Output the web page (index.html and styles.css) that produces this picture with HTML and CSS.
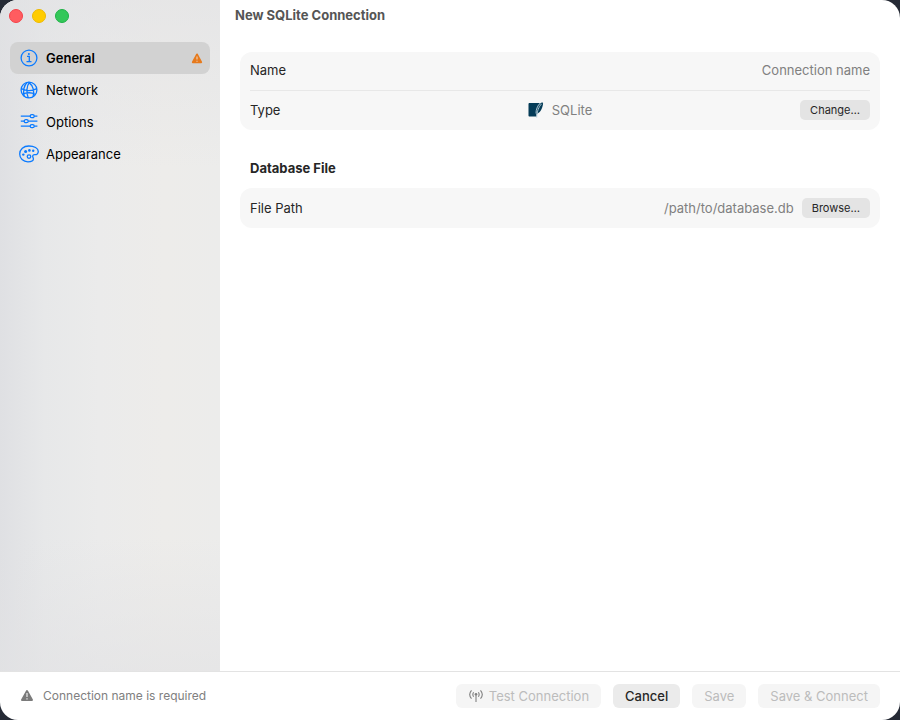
FILE: index.html
```html
<!DOCTYPE html>
<html lang="en">
    <head>
        <meta charset="utf-8">
        <meta name="viewport" content="width=device-width, initial-scale=1">
        <title>New SQLite Connection</title>
        <link rel="stylesheet" href="styles.css">
    </head>
    <body>
        <div class="window">
            <div class="content">
                <aside class="sidebar">
                    <div class="window-controls">
                        <button type="button" class="control close" aria-label="Close"></button>
                        <button type="button" class="control minimize" aria-label="Minimize"></button>
                        <button type="button" class="control zoom" aria-label="Zoom"></button>
                    </div>
                    <nav class="nav">
                        <a href="#general" class="nav-item active" aria-current="page">
                            <svg class="nav-icon" viewBox="0 0 20 20">
                                <circle cx="10" cy="10" r="7.9"/>
                                <path d="M8 8.4h2.3v5M7.5 13.6h5"/>
                                <circle class="fill" cx="9.9" cy="5.9" r="1"/>
                            </svg>
                            <span>General</span>
                            <svg class="nav-warning" viewBox="0 0 12 12">
                                <path d="M6 2.4 10.2 10.2H1.8z" fill="#e67a1d" stroke="#e67a1d" stroke-width="1.9" stroke-linejoin="round"/>
                                <path d="M6 4.4v3.2M6 8.8v.9" stroke="#f0d4bb" stroke-width="1.1"/>
                            </svg>
                        </a>
                        <a href="#network" class="nav-item">
                            <svg class="nav-icon" viewBox="0 0 20 20">
                                <circle cx="10" cy="10" r="7.9"/>
                                <path d="M10.5 2.1C7.4 6.2 7.2 12.8 9.3 17.9M9.5 2.1c4.8 3.4 6.2 10 4.5 14.6M8.4 2.3C4.8 5.3 3.7 11.6 5.2 16.2M2.2 8.6c4.800 2.400 11.200 2.400 15.600 0M3.400 14.200c3.800-1.700 9.400-1.700 13.200 0"/>
                            </svg>
                            <span>Network</span>
                        </a>
                        <a href="#options" class="nav-item">
                            <svg class="nav-icon" viewBox="0 0 20 20">
                                <path d="M1.8 4.2h9.4M15.2 4.2h3.2M1.8 9.2h3.4M9.2 9.2h9.2M1.8 14.2h9.4M15.2 14.2h3.2"/>
                                <rect x="11.2" y="2.7" width="4" height="3" rx="1.5"/>
                                <rect x="5.2" y="7.7" width="4" height="3" rx="1.5"/>
                                <rect x="11.2" y="12.7" width="4" height="3" rx="1.5"/>
                            </svg>
                            <span>Options</span>
                        </a>
                        <a href="#appearance" class="nav-item">
                            <svg class="nav-icon" viewBox="0 0 20 20">
                                <path d="M9.8 2C4.6 2 .7 5.4.7 10c0 4.4 3.5 7.8 8.2 7.8 3.4 0 5.5-1.3 5.5-2.7 0-1.2-.7-1.8-.7-2.8 0-1.1.9-1.8 2.2-1.7 1.9.1 3.4-1 3.4-3C19.3 4.3 15.2 2 9.8 2z"/>
                                <circle cx="10" cy="12.6" r="1.8"/>
                                <circle class="fill" cx="4.3" cy="10.6" r="1.2"/>
                                <circle class="fill" cx="6.6" cy="7.600" r="1.500"/>
                                <circle class="fill" cx="10.400" cy="6.400" r="1.300"/>
                                <circle class="fill" cx="14.200" cy="6.800" r="1.200"/>
                            </svg>
                            <span>Appearance</span>
                        </a>
                    </nav>
                </aside>
                <main class="main">
                    <h1 class="title">New SQLite Connection</h1>
                    <form class="form" id="connection-form">
                        <section class="group">
                            <div class="row">
                                <label for="name">Name</label>
                                <input class="field" type="text" id="name" placeholder="Connection name">
                            </div>
                            <div class="row type-row">
                                <span>Type</span>
                                <span class="db-type">
                                    <svg class="db-icon" viewBox="0 0 16 16">
                                        <path d="M1.600 1h10.700C10 3.500 8.500 8.500 8.500 14.600H1.600C.9 14.600.5 14.100.5 13.500V2.100C.5 1.500.9 1 1.600 1z" fill="#043b57"/>
                                        <path d="M14.900.8c-1.200-1-2.600.2-4 2.200C9.200 5.600 8.400 9 8.500 12c3.300-.8 5.400-4.800 6.100-8 .3-1.300.7-2.600.3-3.200z" fill="#043b57"/>
                                        <path d="M13.600 1.800C10.700 5 9 9 8.700 15.600M12 1.200C9.300 4 8 7.500 8 11.500" fill="none" stroke="#b9d0dc" stroke-width=".9"/>
                                    </svg>
                                    SQLite
                                </span>
                                <button type="button" class="small-button">Change…</button>
                            </div>
                        </section>
                        <h2 class="group-title">Database File</h2>
                        <section class="group">
                            <div class="row file-row">
                                <label for="path">File Path</label>
                                <input class="field" type="text" id="path" placeholder="/path/to/database.db">
                                <button type="button" class="small-button">Browse…</button>
                            </div>
                        </section>
                    </form>
                </main>
            </div>
            <footer class="footer">
                <svg class="footer-warning" viewBox="0 0 14 14">
                    <path d="M7 2 12 10.900H2z" fill="#7b7b7b" stroke="#7b7b7b" stroke-width="2" stroke-linejoin="round"/>
                    <path d="M7 4v4M7 9.200v1.200" stroke="#eee" stroke-width="1.200"/>
                </svg>
                <span class="message">Connection name is required</span>
                <button type="button" class="button" disabled>
                    <svg class="antenna" viewBox="0 0 16 14">
                        <path d="M8 5.500v7.500M5.600 3.300q-1.500 2.200 0 4.400M10.400 3.300q1.500 2.200 0 4.400M3.500 1.300Q-.1 5.500 3.500 9.700M12.500 1.300q3.600 4.200 0 8.400"/>
                        <circle cx="8" cy="5.300" r="1.300"/>
                    </svg>
                    Test Connection
                </button>
                <button type="button" class="button">Cancel</button>
                <button type="submit" form="connection-form" class="button" disabled>Save</button>
                <button type="submit" form="connection-form" class="button" disabled>Save &amp; Connect</button>
            </footer>
        </div>
    </body>
</html>
```
FILE: styles.css
```css
* {
    box-sizing: border-box;
}
body {
    margin: 0;
    background: #252a35;
    color: #262626;
    font-family: Inter, "Liberation Sans", sans-serif;
    font-size: 13px;
    line-height: 16px;
}
button,
input {
    font: inherit;
    color: inherit;
}
.window {
    display: flex;
    flex-direction: column;
    min-height: 100vh;
    background: #fff;
    border-radius: 18px;
    overflow: hidden;
}
.content {
    display: flex;
    flex: 1;
}

/* sidebar */
.sidebar {
    flex: 0 0 220px;
    padding: 8px 10px;
    background:
        linear-gradient(rgba(226, 226, 228, 0.6), transparent 25%, transparent 80%, rgba(226, 226, 228, 0.6)),
        linear-gradient(to right, #dfe0e3, #e7e8e9 20%, #ebebeb 45%, #edecea 75%, #ececeb);
}
.window-controls {
    display: flex;
    gap: 9px;
    height: 16px;
    align-items: center;
    margin-left: -1px;
}
.control {
    width: 14px;
    height: 14px;
    padding: 0;
    border: 1px solid;
    border-radius: 50%;
}
.close {
    background: #ff5c60;
    border-color: #f34249;
}
.minimize {
    background: #ffcc00;
    border-color: #edb900;
}
.zoom {
    background: #34c759;
    border-color: #1eb146;
}
.nav {
    margin-top: 18px;
}
.nav-item {
    display: flex;
    align-items: center;
    gap: 7px;
    height: 32px;
    padding: 0 7px 0 9px;
    border-radius: 8px;
    color: #000;
    text-decoration: none;
}
.nav-item.active {
    background: #d2d2d2;
    font-weight: 600;
}
.nav-icon {
    width: 20px;
    height: 20px;
    fill: none;
    stroke: #0a7aff;
    stroke-width: 1.3;
}
.nav-icon .fill {
    fill: #0a7aff;
    stroke: none;
}
.nav-warning {
    width: 12px;
    height: 12px;
    margin-left: auto;
}

/* form */
.main {
    flex: 1;
    min-width: 0;
}
.title {
    margin: 0;
    padding: 7px 15px 9px;
    color: #555;
    font-size: 13px;
    font-weight: 700;
}
.form {
    padding: 20px;
}
.group {
    padding: 0 10px;
    background: #f7f7f7;
    border-radius: 12px;
}
.group-title {
    margin: 0;
    padding: 30px 10px 12px;
    font-size: 13px;
    font-weight: 700;
}
.row {
    display: flex;
    align-items: center;
    gap: 8px;
    height: 38px;
    padding-bottom: 2px;
}
.type-row {
    display: grid;
    grid-template-columns: 1fr auto 1fr;
    height: 40px;
    border-top: 1px solid #e8e8e8;
}
.type-row .small-button {
    justify-self: end;
}
.file-row {
    height: 40px;
    padding-bottom: 0;
}
.field {
    flex: 1;
    min-width: 0;
    padding: 0;
    border: 0;
    outline: 0;
    background: none;
    text-align: right;
}
.field::placeholder {
    color: #808080;
    opacity: 1;
}
.db-type {
    display: flex;
    align-items: center;
    gap: 8px;
    color: #808080;
}
.db-icon {
    width: 16px;
    height: 16px;
}
.small-button {
    height: 20px;
    padding: 0 10px;
    border: 0;
    border-radius: 5px;
    background: #e4e4e4;
    font-size: 11px;
}

/* footer */
.footer {
    display: flex;
    align-items: center;
    gap: 12px;
    padding: 12px 20px;
    border-top: 1px solid #e3e3e3;
}
.footer-warning {
    width: 14px;
    height: 14px;
    margin-right: -3px;
}
.message {
    margin-right: auto;
    color: #808080;
    font-size: 12px;
}
.button {
    display: flex;
    align-items: center;
    gap: 5px;
    height: 24px;
    padding: 0 12px;
    border: 0;
    border-radius: 6px;
    background: #ebebeb;
    font-weight: 500;
}
.button:disabled {
    background: #f5f5f5;
    color: #bcbcbc;
    font-weight: 400;
}
.antenna {
    width: 16px;
    height: 14px;
    fill: #808080;
}
.antenna path {
    fill: none;
    stroke: #808080;
    stroke-width: 1.1;
}
```
